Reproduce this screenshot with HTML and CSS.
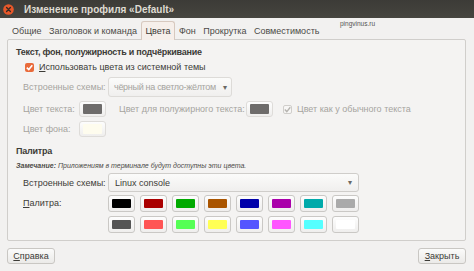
FILE: index.html
```html
<!DOCTYPE html>
<html lang="ru">
<head>
<meta charset="utf-8">
<link rel="stylesheet" href="styles.css">
</head>
<body>
<div class="window">
  <div class="titlebar">
    <span class="close"><svg width="11" height="11" viewBox="0 0 11 11"><circle cx="5.5" cy="5.5" r="5.3" fill="#e9582a"/><path d="M3.6 3.6 L7.4 7.4 M7.4 3.6 L3.6 7.4" stroke="#3a2a22" stroke-width="1.4" stroke-linecap="round"/></svg></span>
    <span class="title">Изменение профиля «Default»</span>
  </div>
  <div class="tabs">
    <span class="tab">Общие</span>
    <span class="tab">Заголовок и команда</span>
    <span class="tab active">Цвета</span>
    <span class="tab">Фон</span>
    <span class="tab">Прокрутка</span>
    <span class="tab">Совместимость</span>
    <span class="watermark">pingvinus.ru</span>
  </div>
  <div class="panel">
    <div class="heading h-first">Текст, фон, полужирность и подчёркивание</div>
    <div class="check-row">
      <span class="checkbox on"><svg width="9" height="9" viewBox="0 0 9 9"><path d="M1.8 4.6 L3.8 6.6 L7.3 2.3" fill="none" stroke="#fff" stroke-width="1.6"/></svg></span>
      <span><u>И</u>спользовать цвета из системной темы</span>
    </div>
    <div class="row r-scheme disabled">
      <span class="label">Встроенные схемы:</span>
      <span class="combo small"><span class="combo-text">чёрный на светло-жёлтом</span><span class="arrow">▾</span></span>
    </div>
    <div class="row r-color disabled">
      <span class="label short">Цвет текста:</span>
      <span class="swatch"><i style="background:#6e6c6b"></i></span>
      <span class="label2">Цвет для полужирного текста:</span>
      <span class="swatch"><i style="background:#6e6c6b"></i></span>
      <span class="checkbox off"><svg width="9" height="9" viewBox="0 0 9 9"><path d="M1.8 4.6 L3.8 6.6 L7.3 2.3" fill="none" stroke="#b6b4b0" stroke-width="1.4"/></svg></span>
      <span>Цвет как у обычного текста</span>
    </div>
    <div class="row r-bg disabled">
      <span class="label short">Цвет фона:</span>
      <span class="swatch"><i style="background:#fefcee"></i></span>
    </div>
    <div class="heading h-second">Палитра</div>
    <div class="note"><b>Замечание:</b> Приложениям в терминале будут доступны эти цвета.</div>
    <div class="row r-scheme2">
      <span class="label">Встроенные схемы:</span>
      <span class="combo wide">Linux console<span class="arrow">▾</span></span>
    </div>
    <div class="palette-row">
      <span class="label"><u>П</u>алитра:</span>
      <div class="palette">
        <span class="swatch"><i style="background:#000000"></i></span>
        <span class="swatch"><i style="background:#aa0000"></i></span>
        <span class="swatch"><i style="background:#00aa00"></i></span>
        <span class="swatch"><i style="background:#aa5500"></i></span>
        <span class="swatch"><i style="background:#0000aa"></i></span>
        <span class="swatch"><i style="background:#aa00aa"></i></span>
        <span class="swatch"><i style="background:#00aaaa"></i></span>
        <span class="swatch"><i style="background:#aaaaaa"></i></span>
        <span class="swatch"><i style="background:#555555"></i></span>
        <span class="swatch"><i style="background:#ff5555"></i></span>
        <span class="swatch"><i style="background:#55ff55"></i></span>
        <span class="swatch"><i style="background:#ffff55"></i></span>
        <span class="swatch"><i style="background:#5555ff"></i></span>
        <span class="swatch"><i style="background:#ff55ff"></i></span>
        <span class="swatch"><i style="background:#55ffff"></i></span>
        <span class="swatch"><i style="background:#ffffff"></i></span>
      </div>
    </div>
  </div>
  <div class="buttons">
    <span class="btn"><u>С</u>правка</span>
    <span class="btn"><u>З</u>акрыть</span>
  </div>
</div>
</body>
</html>
```

FILE: styles.css
```css
* { box-sizing: border-box; }
html, body { margin: 0; padding: 0; }
body {
  width: 474px;
  height: 271px;
  overflow: hidden;
  background: #f2f1f0;
  font-family: "Liberation Sans", Arial, sans-serif;
  font-size: 9px;
  color: #3c3b37;
  white-space: nowrap;
}
.window { width: 474px; height: 271px; }
.titlebar {
  height: 18px;
  background: linear-gradient(#3c3b37, #46453f);
  display: flex;
  align-items: center;
  padding-left: 2px;
}
.close { display: flex; width: 12px; height: 12px; align-items: center; justify-content: center; }
.title {
  margin-left: 10px;
  color: #dfdbd2;
  font-weight: bold;
  font-size: 10px;
}
.tabs {
  height: 19px;
  margin-top: 3px;
  display: flex;
  align-items: stretch;
  padding-left: 8.5px;
  position: relative;
}
.tab {
  display: flex;
  align-items: center;
  padding: 0 3.5px;
  margin-right: 0.5px;
  color: #4c4b47;
}
.tab.active {
  border: 1px solid #d7c9bf;
  border-bottom: none;
  border-radius: 3px 3px 0 0;
  background: #f6efea;
  color: #3c3b37;
}
.watermark {
  position: absolute;
  left: 340px;
  top: -1px;
  font-size: 6.5px;
  color: #555;
}
.panel {
  margin: -1px 8px 0 7px;
  height: 202px;
  border: 1px solid #d0cecb;
  border-radius: 2px;
  background: #f4f3f2;
  padding: 4px 0 0 8px;
}
.heading {
  font-weight: bold; height: 16px; line-height: 16px; color: #3c3b37;
  letter-spacing: -0.25px;
}
.check-row {
  height: 14px;
  display: flex;
  align-items: center;
  padding-left: 9px;
  gap: 5px;
}
.checkbox {
  width: 9px; height: 9px;
  border-radius: 2px;
  display: flex;
  flex: none;
}
.checkbox.on { background: #e96a3a; }
.checkbox.off { border: 1px solid #d0cecb; background: #f7f6f5; }
.checkbox.off svg { margin: -1px; }
.row { display: flex; align-items: center; padding-left: 7px; }
.label { width: 85px; flex: none; }
.label.short { width: 56px; }
.disabled { color: #a6a49f; }
.r-scheme { height: 20px; margin-top: 3px; }
.r-color { height: 16px; margin-top: 4px; }
.r-bg { height: 16px; margin-top: 4px; }
.label2 { margin: 0 5px 0 13px; width: 122px; }
.r-color .checkbox { margin: 0 5px 0 10px; }
.h-second { margin-top: 6px; }
.note {
  height: 14px; line-height: 14px;
  font-size: 7px; font-style: italic; color: #4c4b47;
}
.note b { font-weight: bold; }
.r-scheme2 { height: 19px; }
.combo {
  height: 100%;
  display: flex;
  align-items: center;
  justify-content: space-between;
  padding: 0 6px;
  border: 1px solid #cfcdca;
  border-radius: 3px;
  background: linear-gradient(#fbfbfa, #f0efee);
  color: #3c3b37;
}
.disabled .combo { color: #a6a49f; border-color: #dddbd8; }
.combo.small { width: 124px; padding: 0 4px 0 5px; }
.combo-text { letter-spacing: -0.3px; }
.combo.wide { width: 251px; }
.arrow { font-size: 8px; color: #6a6864; }
.palette-row { display: flex; padding-left: 7px; margin-top: 3px; }
.palette-row .label { padding-top: 3px; }
.palette {
  display: grid;
  grid-template-columns: repeat(8, 27px);
  grid-auto-rows: 17px;
  column-gap: 5px;
  row-gap: 4px;
}
.swatch {
  width: 27px; height: 16px;
  border: 1px solid #cac8c5;
  border-radius: 3px;
  background: linear-gradient(#fdfdfd, #efeeed);
  display: flex;
  padding: 2px 3px;
  flex: none;
}
.palette .swatch { height: 17px; padding: 3px 3px; }
.swatch i { flex: 1; border-radius: 1px; }
.disabled .swatch { border-color: #dedcd9; }
.buttons {
  display: flex;
  justify-content: space-between;
  padding: 7px 8px 0 7px;
}
.btn {
  width: 48px; height: 16px;
  display: flex; align-items: center; justify-content: center;
  border: 1px solid #c9c7c3;
  border-radius: 3px;
  background: linear-gradient(#fbfbfa, #ebeae8);
  color: #3c3b37;
}
u { text-decoration: underline; text-underline-offset: 1px; }
```
